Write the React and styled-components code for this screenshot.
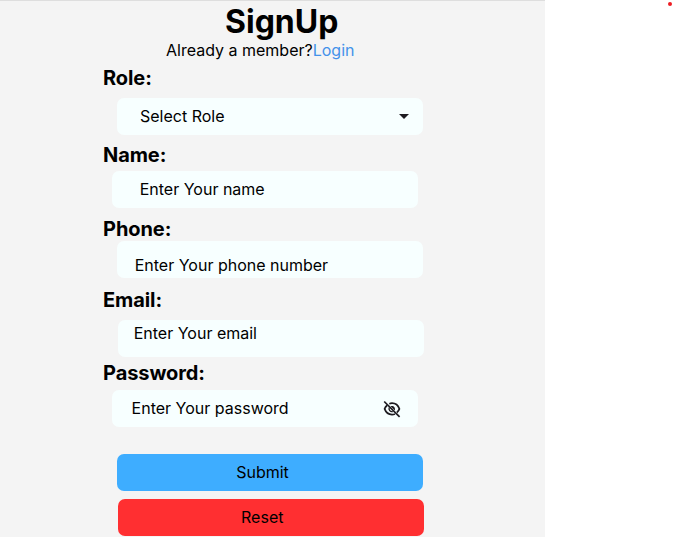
import React from "react";
import styled, { createGlobalStyle } from "styled-components";

const GlobalStyle = createGlobalStyle`
  * { box-sizing: border-box; }
  body {
    margin: 0;
    background: #fff;
    color: #000;
    font-family: Inter, "Liberation Sans", sans-serif;
    overflow: hidden;
  }
`;

const Page = styled.div`
  display: flex;
  justify-content: space-between;
  width: 673px;
  height: 537px;
  overflow: hidden;
`;

const Panel = styled.main`
  width: 545px;
  height: 537px;
  padding-left: 103px;
  background: #f4f4f4;
  border-top: 1px solid #dedede;
`;

const Title = styled.h1`
  margin: 0 0 0 122px;
  font-size: 32px;
  line-height: 42px;
  font-weight: 700;
  white-space: nowrap;
`;

const Prompt = styled.p`
  margin: -3px 0 6px 63px;
  font-size: 16px;
  line-height: 20px;
  white-space: nowrap;
`;

const LoginLink = styled.a`
  color: #4392ea;
`;

const Field = styled.div`
  display: flex;
  flex-direction: column;
  gap: ${(p) => p.$gap}px;
  margin-bottom: ${(p) => p.$after}px;
`;

const Label = styled.label`
  font-size: 20px;
  line-height: 24px;
  font-weight: 700;
  letter-spacing: -0.08px;
`;

const Control = styled.div`
  display: flex;
  justify-content: space-between;
  width: 306px;
  height: 37px;
  margin-left: ${(p) => p.$indent}px;
  padding: ${(p) => p.$top}px 0 0 ${(p) => p.$left}px;
  border-radius: 7px;
  background: #f7ffff;
  font-size: 16px;
  line-height: 20px;
  white-space: nowrap;
`;

const Caret = styled.svg`
  width: 10px;
  height: 5px;
  margin: 8px 14px 0 0;
`;

const Eye = styled.svg`
  width: 18px;
  height: 18px;
  margin: 2px 17px 0 0;
`;

const Button = styled.button`
  display: flex;
  align-items: center;
  justify-content: center;
  width: 306px;
  height: 37px;
  margin: 0 0 8px ${(p) => p.$indent}px;
  padding: 0 ${(p) => p.$shift}px 2px 0;
  border: 0;
  border-radius: 7px;
  background: ${(p) => p.$color};
  color: #000;
  font: 400 16px/20px Inter, "Liberation Sans", sans-serif;
`;

const Dot = styled.span`
  width: 4px;
  height: 4px;
  margin: 2px 1px 0 0;
  border-radius: 50%;
  background: #ee1d23;
`;

const caret = (
  <Caret viewBox="0 0 10 5">
    <path d="M0 0H10L5 5Z" fill="#1d1b20" />
  </Caret>
);

const hiddenEye = (
  <Eye viewBox="0 0 18 18" fill="none" stroke="#1d1b20" strokeWidth="1.7">
    <path d="M6.3 3.7C7.1 3.4 8 3.2 9 3.2C12.4 3.2 15.1 5.2 16.4 8.9C15.9 10.3 15 11.6 13.9 12.5" />
    <path d="M4.2 5.3C3 6.2 2.1 7.5 1.6 8.9C2.9 12.4 5.6 14.6 9 14.6C10.1 14.6 11.1 14.4 12 14" />
    <path d="M7.6 6.3C10.3 5.2 12.7 7.7 11.8 10.4Z" fill="#1d1b20" stroke="none" />
    <path d="M6.3 7.6C5.3 9.8 7.3 12.2 9.8 11.6" strokeWidth="1.3" />
    <path d="M1.2 1.5L16.6 16.9" />
  </Eye>
);

const fields = [
  { label: "Role:", text: "Select Role", gap: 8, after: 8, indent: 14, top: 8, left: 23, icon: caret },
  { label: "Name:", text: "Enter Your name", gap: 4, after: 9, indent: 9, top: 8, left: 27.7 },
  { label: "Phone:", text: "Enter Your phone number", gap: 0, after: 10, indent: 14, top: 14, left: 17.7 },
  { label: "Email:", text: "Enter Your email", gap: 8, after: 4, indent: 15, top: 3, left: 15.7 },
  { label: "Password:", text: "Enter Your password", gap: 5, after: 27, indent: 9, top: 8, left: 19.6, icon: hiddenEye },
];

export default function App() {
  return (
    <>
      <GlobalStyle />
      <Page>
        <Panel>
          <Title>SignUp</Title>
          <Prompt>
            Already a member?<LoginLink>Login</LoginLink>
          </Prompt>
          {fields.map((f) => (
            <Field key={f.label} $gap={f.gap} $after={f.after}>
              <Label>{f.label}</Label>
              <Control $indent={f.indent} $top={f.top} $left={f.left}>
                <span>{f.text}</span>
                {f.icon}
              </Control>
            </Field>
          ))}
          <Button $indent={14} $shift={15} $color="#3eadff">Submit</Button>
          <Button $indent={15} $shift={17.5} $color="#ff2f31">Reset</Button>
        </Panel>
        <Dot />
      </Page>
    </>
  );
}
